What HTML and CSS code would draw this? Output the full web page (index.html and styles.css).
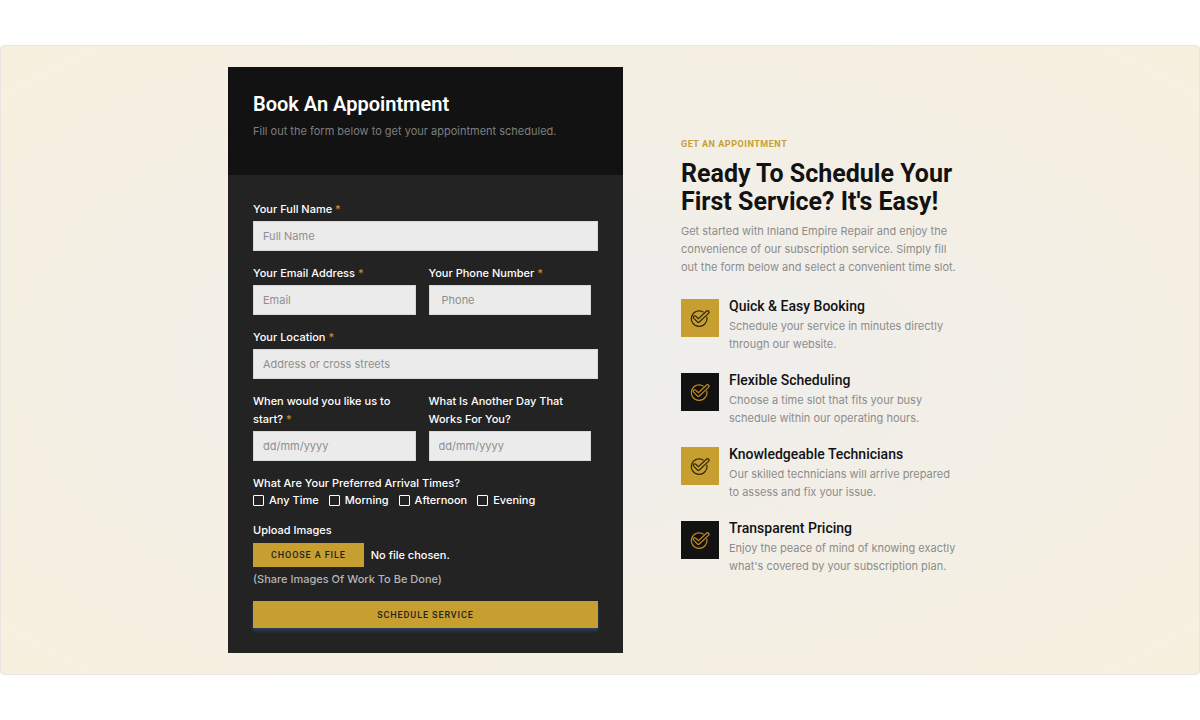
FILE: index.html
```html
<!DOCTYPE html>
<html lang="en">
<head>
  <meta charset="UTF-8">
  <meta name="viewport" content="width=device-width, initial-scale=1">
  <title>Book An Appointment</title>
  <link rel="stylesheet" href="styles.css">
</head>
<body>
  <svg width="0" height="0" class="sprite" aria-hidden="true">
    <symbol id="check" viewBox="0 0 20 20">
      <path d="M13.600 4.200A7.800 7.800 0 1 0 16.700 8.600" />
      <path d="M3.700 8.300a1.500 1.500 0 0 1 2.100 0L8.400 10.700 16.400 3.200a1.500 1.500 0 0 1 2.100 2.200L9.300 14a1.300 1.300 0 0 1-1.800 0L3.800 10.400a1.500 1.500 0 0 1-.1-2.100z" />
    </symbol>
  </svg>

  <section class="appointment">
    <div class="container">
      <div class="card">
        <div class="card-header">
          <h2>Book An Appointment</h2>
          <p>Fill out the form below to get your appointment scheduled.</p>
        </div>
        <form class="card-body">
          <div class="field">
            <label for="name">Your Full Name <span class="req">*</span></label>
            <input type="text" id="name" placeholder="Full Name">
          </div>
          <div class="row">
            <div class="field">
              <label for="email">Your Email Address <span class="req">*</span></label>
              <input type="email" id="email" placeholder="Email">
            </div>
            <div class="field">
              <label for="phone">Your Phone Number <span class="req">*</span></label>
              <input type="tel" id="phone" placeholder="Phone">
            </div>
          </div>
          <div class="field">
            <label for="location">Your Location <span class="req">*</span></label>
            <input type="text" id="location" placeholder="Address or cross streets">
          </div>
          <div class="row">
            <div class="field">
              <label for="start">When would you like us to start? <span class="req">*</span></label>
              <input type="text" id="start" placeholder="dd/mm/yyyy">
            </div>
            <div class="field">
              <label for="other">What Is Another Day That Works For You?</label>
              <input type="text" id="other" placeholder="dd/mm/yyyy">
            </div>
          </div>
          <fieldset class="times">
            <legend>What Are Your Preferred Arrival Times?</legend>
            <div class="options">
              <label><input type="checkbox" name="time"> Any Time</label>
              <label><input type="checkbox" name="time"> Morning</label>
              <label><input type="checkbox" name="time"> Afternoon</label>
              <label><input type="checkbox" name="time"> Evening</label>
            </div>
          </fieldset>
          <div class="upload">
            <label for="file">Upload Images</label>
            <div class="file-row">
              <input type="file" id="file" class="file-input">
              <label for="file" class="file-btn">Choose a file</label>
              <span>No file chosen.</span>
            </div>
            <p class="note">(Share Images Of Work To Be Done)</p>
          </div>
          <button type="submit" class="submit">Schedule Service</button>
        </form>
      </div>

      <div class="info">
        <p class="kicker">Get an appointment</p>
        <h1>Ready To Schedule Your First Service? It's Easy!</h1>
        <p class="text">Get started with Inland Empire Repair and enjoy the convenience of our subscription service. Simply fill out the form below and select a convenient time slot.</p>
        <ul class="features">
          <li>
            <span class="icon"><svg><use href="#check" /></svg></span>
            <div>
              <h3>Quick &amp; Easy Booking</h3>
              <p class="text">Schedule your service in minutes directly through our website.</p>
            </div>
          </li>
          <li>
            <span class="icon dark"><svg><use href="#check" /></svg></span>
            <div>
              <h3>Flexible Scheduling</h3>
              <p class="text">Choose a time slot that fits your busy schedule within our operating hours.</p>
            </div>
          </li>
          <li>
            <span class="icon"><svg><use href="#check" /></svg></span>
            <div>
              <h3>Knowledgeable Technicians</h3>
              <p class="text">Our skilled technicians will arrive prepared to assess and fix your issue.</p>
            </div>
          </li>
          <li>
            <span class="icon dark"><svg><use href="#check" /></svg></span>
            <div>
              <h3>Transparent Pricing</h3>
              <p class="text">Enjoy the peace of mind of knowing exactly what's covered by your subscription plan.</p>
            </div>
          </li>
        </ul>
      </div>
    </div>
  </section>
</body>
</html>
```
FILE: styles.css
```css
* {
  box-sizing: border-box;
}
body {
  margin: 0;
  padding: 45px 0;
  background: #fff;
  color: #fff;
  font-family: Inter, "Liberation Sans", sans-serif;
  font-size: 11px;
  line-height: 18px;
}
h1, h2, h3, p, ul {
  margin: 0;
  padding: 0;
}
h1, h2, h3 {
  font-family: Roboto, "Liberation Sans", sans-serif;
}
.sprite {
  position: absolute;
}
.appointment {
  padding: 21px 0;
  border: 1px solid #e8e6e0;
  border-radius: 4px;
  background: radial-gradient(ellipse at center, #eeeeee, #f8f0de);
}
.container {
  display: grid;
  grid-template-columns: 395fr 291fr;
  gap: 58px;
  align-items: center;
  max-width: 744px;
  margin: 0 auto;
}

/* form card */
.card {
  background: #232323;
}
.card-header {
  padding: 25px 25px 35px;
  background: #121212;
}
.card-header h2 {
  font-size: 20px;
  font-weight: 600;
  line-height: 24px;
  margin-bottom: 6px;
}
.card-header p {
  color: #7f7f7f;
}
.card-body {
  padding: 25px;
  font-weight: 500;
}
.field {
  display: flex;
  flex-direction: column;
  gap: 3px;
  margin-bottom: 13px;
}
.field input {
  width: 100%;
  height: 30px;
  padding: 0 9px;
  border: 1px solid #d8d8d8;
  border-radius: 0;
  background: #ebebeb;
  color: #232323;
  font: inherit;
  font-weight: 400;
}
.field input::placeholder {
  color: #8f8f8f;
  opacity: 1;
}
.field input[type="tel"] {
  padding-left: 12px;
}
.row {
  display: grid;
  grid-template-columns: 1fr 1fr;
  gap: 13px;
  padding-right: 7px;
}
.req {
  color: #c8912c;
}
.times {
  margin: 0 0 13px;
  padding: 0;
  border: 0;
}
.times legend {
  padding: 0;
}
.options {
  display: flex;
  gap: 10px;
  line-height: 16px;
}
.options label {
  display: flex;
  align-items: center;
  gap: 5px;
}
.options input {
  appearance: none;
  width: 11px;
  height: 11px;
  margin: 0;
  border: 1px solid #fff;
  border-radius: 1px;
}
.upload {
  margin-bottom: 13px;
}
.file-row {
  display: flex;
  align-items: center;
  gap: 7px;
  margin: 4px 0 3px;
}
.file-input {
  position: absolute;
  width: 1px;
  height: 1px;
  opacity: 0;
}
.file-btn,
.submit {
  background: #c79f31;
  color: #232323;
  font: 500 9px/18px Roboto, sans-serif;
  letter-spacing: 0.1em;
  text-transform: uppercase;
}
.file-btn {
  padding: 3px 18px;
}
.note {
  color: #b5b5b5;
}
.submit {
  display: block;
  width: 100%;
  height: 27px;
  padding: 0;
  border: 0;
  box-shadow: 0 3px 3px #2b3b5c;
}

/* right column */
.info {
  padding-bottom: 11px;
}
.kicker {
  color: #c79f31;
  font-family: Roboto, sans-serif;
  font-size: 9px;
  font-weight: 700;
  letter-spacing: 0.06em;
  text-transform: uppercase;
}
.info h1 {
  margin: 7px 0 6px;
  color: #121212;
  font-size: 25px;
  line-height: 28px;
}
.text {
  max-width: 280px;
  color: #8c8c8c;
}
.features {
  display: flex;
  flex-direction: column;
  gap: 18px;
  margin-top: 21px;
  list-style: none;
}
.features li {
  display: flex;
  align-items: flex-start;
  gap: 10px;
}
.features .text {
  max-width: 230px;
}
.features h3 {
  margin-bottom: 2px;
  color: #121212;
  font-size: 14px;
  font-weight: 500;
  line-height: 18px;
}
.icon {
  display: flex;
  flex: none;
  align-items: center;
  justify-content: center;
  width: 38px;
  height: 38px;
  margin-top: 2px;
  background: #c79f31;
  color: #33280f;
}
.icon.dark {
  background: #121212;
  color: #c08a1e;
}
.icon svg {
  width: 20px;
  height: 20px;
  fill: none;
  stroke: currentColor;
  stroke-width: 1.2;
}
```
